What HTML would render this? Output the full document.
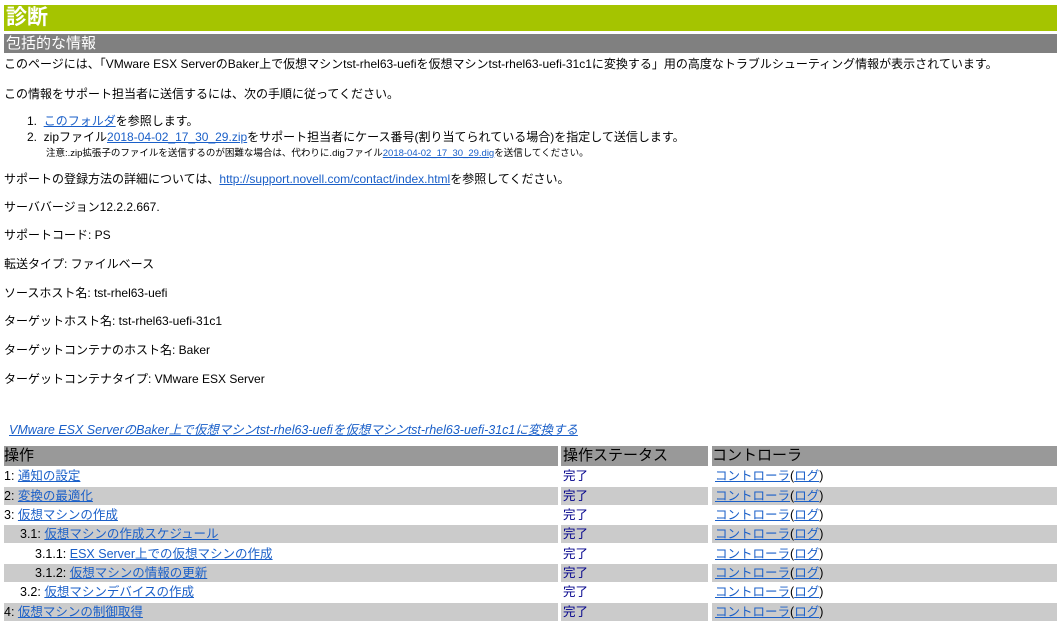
<!DOCTYPE html>
<html><head><meta charset="utf-8"><style>
body{margin:0;width:1057px;height:620px;overflow:hidden;background:#fff;font-family:"Liberation Sans","Noto Sans CJK JP",sans-serif;font-size:12px;color:#000;position:relative}
.a{position:absolute;white-space:nowrap;line-height:14px}
a{color:#1a5fc8;text-decoration:underline}
.h1{position:absolute;left:4px;top:5px;width:1053px;height:26px;background:#a5c400;color:#fff;font-size:21px;line-height:26px;font-weight:bold;padding-left:2px;box-sizing:border-box}
.h2{position:absolute;left:4px;top:34px;width:1053px;height:19px;background:#808080;color:#fff;font-size:15px;line-height:19px;padding-left:2px;box-sizing:border-box}
.c{position:absolute;height:18px;line-height:18px;white-space:nowrap;font-size:12.5px}
.g{background:#cbcbcb}
.hd{background:#999;font-size:15px;height:20px;line-height:20px;top:446px}
.st{color:#00008b}
</style></head><body>
<div class="h1">診断</div>
<div class="h2">包括的な情報</div>
<div class="a" style="left:4px;top:57px">このページには、「VMware ESX ServerのBaker上で仮想マシンtst-rhel63-uefiを仮想マシンtst-rhel63-uefi-31c1に変換する」用の高度なトラブルシューティング情報が表示されています。</div>
<div class="a" style="left:4px;top:87px">この情報をサポート担当者に送信するには、次の手順に従ってください。</div>
<div class="a" style="left:27px;top:114px">1.&nbsp; <a>このフォルダ</a>を参照します。</div>
<div class="a" style="left:27px;top:130px">2.&nbsp; zipファイル<a>2018-04-02_17_30_29.zip</a>をサポート担当者にケース番号(割り当てられている場合)を指定して送信します。</div>
<div class="a" style="left:46px;top:148px;font-size:9.5px;line-height:12px">注意:.zip拡張子のファイルを送信するのが困難な場合は、代わりに.digファイル<a>2018-04-02_17_30_29.dig</a>を送信してください。</div>
<div class="a" style="left:4px;top:172px">サポートの登録方法の詳細については、<a>http://support.novell.com/contact/index.html</a>を参照してください。</div>
<div class="a" style="left:4px;top:200px">サーババージョン12.2.2.667.</div>
<div class="a" style="left:4px;top:228px">サポートコード: PS</div>
<div class="a" style="left:4px;top:257px">転送タイプ: ファイルベース</div>
<div class="a" style="left:4px;top:286px">ソースホスト名: tst-rhel63-uefi</div>
<div class="a" style="left:4px;top:314px">ターゲットホスト名: tst-rhel63-uefi-31c1</div>
<div class="a" style="left:4px;top:343px">ターゲットコンテナのホスト名: Baker</div>
<div class="a" style="left:4px;top:372px">ターゲットコンテナタイプ: VMware ESX Server</div>
<div class="a" style="left:9px;top:423px;font-style:italic;font-size:12.5px;line-height:15px"><a>VMware ESX ServerのBaker上で仮想マシンtst-rhel63-uefiを仮想マシンtst-rhel63-uefi-31c1に変換する</a></div>

<div class="c hd" style="left:4px;width:554px">操作</div>
<div class="c hd" style="left:561px;width:147px;padding-left:2px;box-sizing:border-box">操作ステータス</div>
<div class="c hd" style="left:712px;width:345px">コントローラ</div>

<div class="c" style="left:4px;top:467px;width:554px">1: <a>通知の設定</a></div>
<div class="c g" style="left:4px;top:487px;width:554px">2: <a>変換の最適化</a></div>
<div class="c" style="left:4px;top:506px;width:554px">3: <a>仮想マシンの作成</a></div>
<div class="c g" style="left:4px;top:525px;width:554px;padding-left:16px;box-sizing:border-box">3.1: <a>仮想マシンの作成スケジュール</a></div>
<div class="c" style="left:4px;top:545px;width:554px;padding-left:31px;box-sizing:border-box">3.1.1: <a>ESX Server上での仮想マシンの作成</a></div>
<div class="c g" style="left:4px;top:564px;width:554px;padding-left:31px;box-sizing:border-box">3.1.2: <a>仮想マシンの情報の更新</a></div>
<div class="c" style="left:4px;top:583px;width:554px;padding-left:16px;box-sizing:border-box">3.2: <a>仮想マシンデバイスの作成</a></div>
<div class="c g" style="left:4px;top:603px;width:554px">4: <a>仮想マシンの制御取得</a></div>

<div class="c st" style="left:561px;top:467px;width:147px;padding-left:2px;box-sizing:border-box">完了</div>
<div class="c st g" style="left:561px;top:487px;width:147px;padding-left:2px;box-sizing:border-box">完了</div>
<div class="c st" style="left:561px;top:506px;width:147px;padding-left:2px;box-sizing:border-box">完了</div>
<div class="c st g" style="left:561px;top:525px;width:147px;padding-left:2px;box-sizing:border-box">完了</div>
<div class="c st" style="left:561px;top:545px;width:147px;padding-left:2px;box-sizing:border-box">完了</div>
<div class="c st g" style="left:561px;top:564px;width:147px;padding-left:2px;box-sizing:border-box">完了</div>
<div class="c st" style="left:561px;top:583px;width:147px;padding-left:2px;box-sizing:border-box">完了</div>
<div class="c st g" style="left:561px;top:603px;width:147px;padding-left:2px;box-sizing:border-box">完了</div>

<div class="c" style="left:712px;top:467px;width:345px;padding-left:3px;box-sizing:border-box"><a>コントローラ</a>(<a>ログ</a>)</div>
<div class="c g" style="left:712px;top:487px;width:345px;padding-left:3px;box-sizing:border-box"><a>コントローラ</a>(<a>ログ</a>)</div>
<div class="c" style="left:712px;top:506px;width:345px;padding-left:3px;box-sizing:border-box"><a>コントローラ</a>(<a>ログ</a>)</div>
<div class="c g" style="left:712px;top:525px;width:345px;padding-left:3px;box-sizing:border-box"><a>コントローラ</a>(<a>ログ</a>)</div>
<div class="c" style="left:712px;top:545px;width:345px;padding-left:3px;box-sizing:border-box"><a>コントローラ</a>(<a>ログ</a>)</div>
<div class="c g" style="left:712px;top:564px;width:345px;padding-left:3px;box-sizing:border-box"><a>コントローラ</a>(<a>ログ</a>)</div>
<div class="c" style="left:712px;top:583px;width:345px;padding-left:3px;box-sizing:border-box"><a>コントローラ</a>(<a>ログ</a>)</div>
<div class="c g" style="left:712px;top:603px;width:345px;padding-left:3px;box-sizing:border-box"><a>コントローラ</a>(<a>ログ</a>)</div>
</body></html>
